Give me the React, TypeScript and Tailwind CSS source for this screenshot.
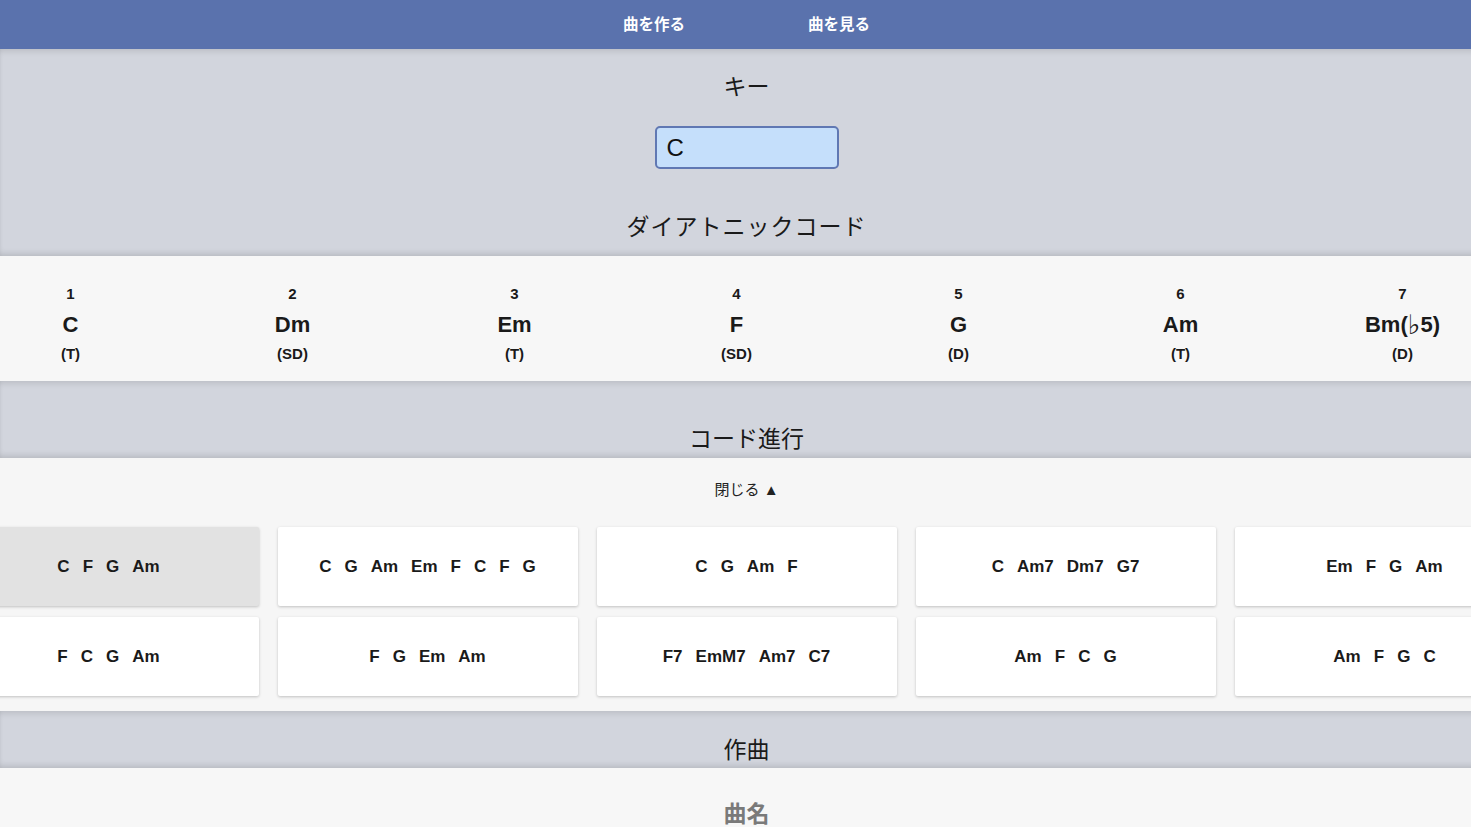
import React from "react";

const FONT = { fontFamily: '"Liberation Sans", "Noto Sans CJK JP", sans-serif' };

const diatonic = [
  { n: "1", c: "C", f: "(T)" },
  { n: "2", c: "Dm", f: "(SD)" },
  { n: "3", c: "Em", f: "(T)" },
  { n: "4", c: "F", f: "(SD)" },
  { n: "5", c: "G", f: "(D)" },
  { n: "6", c: "Am", f: "(T)" },
  { n: "7", c: "Bm(♭5)", f: "(D)" },
];

const progressions = [
  [["C", "F", "G", "Am"], ["C", "G", "Am", "Em", "F", "C", "F", "G"], ["C", "G", "Am", "F"], ["C", "Am7", "Dm7", "G7"], ["Em", "F", "G", "Am"]],
  [["F", "C", "G", "Am"], ["F", "G", "Em", "Am"], ["F7", "EmM7", "Am7", "C7"], ["Am", "F", "C", "G"], ["Am", "F", "G", "C"]],
];

const grayInset =
  "bg-[#d2d5dd] shadow-[inset_0_5px_6px_-3px_rgba(0,0,0,0.12),inset_0_-5px_6px_-3px_rgba(0,0,0,0.14)]";

function ChordName({ c }: { c: string }) {
  if (c.includes("♭")) {
    const [a, b] = c.split("♭");
    return (
      <span className="inline-flex items-center">
        <span>{a}</span>
        <span
          className="text-[27px] font-bold leading-[26px]"
          style={{ fontFamily: '"DejaVu Sans", sans-serif' }}
        >
          ♭
        </span>
        <span>{b}</span>
      </span>
    );
  }
  return <>{c}</>;
}

export default function App() {
  return (
    <div className="w-[1471px] h-[827px] overflow-hidden bg-[#d2d5dd] text-[#1a1a1a]" style={FONT}>
      <div className="w-[1493px]">
        <header className="h-[49px] bg-[#5a72ad] flex items-center justify-center gap-[123px] text-white font-bold text-[15.5px]">
          <span>曲を作る</span>
          <span>曲を見る</span>
        </header>

        <section className={`h-[207px] flex flex-col items-center ${grayInset}`}>
          <div className="mt-[23px] text-[23px] leading-[30px]">キー</div>
          <div className="mt-[24px] w-[184px] h-[43px] rounded-[5px] border-2 border-[#6078b3] bg-[#c5dffb] flex items-center pl-[10px] text-[24px] text-[#111]">
            C
          </div>
          <div className="mt-[43px] text-[23px] leading-[30px] tracking-[1px]">ダイアトニックコード</div>
        </section>
      </div>

      <section className="w-[1471px] h-[125px] bg-[#f7f7f7] flex justify-center overflow-hidden pl-[2px]">
        {diatonic.map((d) => (
          <div key={d.n} className="w-[222px] shrink-0 flex flex-col items-center pt-[29px] font-bold">
            <div className="text-[15px] leading-[18px]">{d.n}</div>
            <div className="mt-[9px] text-[22px] leading-[26px] h-[26px] flex items-center">
              <ChordName c={d.c} />
            </div>
            <div className="mt-[7px] text-[15px] leading-[18px]">{d.f}</div>
          </div>
        ))}
      </section>

      <div className="w-[1493px]">
        <section className={`h-[77px] flex flex-col items-center ${grayInset}`}>
          <div className="mt-[43px] text-[23px] leading-[30px]">コード進行</div>
        </section>

        <section className="h-[253px] bg-[#f6f6f6] flex flex-col items-center">
          <div className="mt-[22px] text-[15px] leading-[20px] text-[#222]">閉じる ▲</div>
          <div className="mt-[27px] flex flex-col gap-[11px]">
            {progressions.map((row, ri) => (
              <div key={ri} className="flex justify-center gap-[19px]">
                {row.map((p, ci) => (
                  <div
                    key={ci}
                    className={`w-[300px] h-[79px] shrink-0 rounded-[2px] flex items-center justify-center gap-[13px] font-bold text-[17px] shadow-[0_1px_3px_rgba(0,0,0,0.22)] ${
                      ri === 0 && ci === 0 ? "bg-[#e2e2e2]" : "bg-white"
                    }`}
                  >
                    {p.map((c, k) => (
                      <span key={k}>{c}</span>
                    ))}
                  </div>
                ))}
              </div>
            ))}
          </div>
        </section>

        <section className={`h-[57px] flex flex-col items-center ${grayInset}`}>
          <div className="mt-[24px] text-[23px] leading-[30px]">作曲</div>
        </section>

        <section className="h-[120px] bg-[#f7f7f7] flex flex-col items-center">
          <div className="mt-[31px] text-[23px] leading-[30px] font-bold text-[#7a7a7a]">曲名</div>
        </section>
      </div>
    </div>
  );
}
